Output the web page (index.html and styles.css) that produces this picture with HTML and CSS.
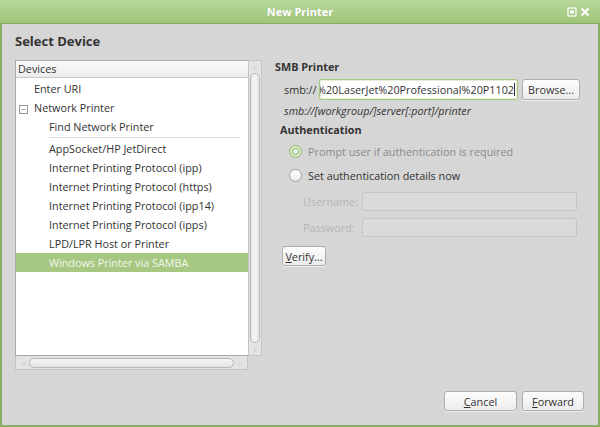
FILE: index.html
```html
<!DOCTYPE html>
<html>
<head>
<meta charset="utf-8">
<link rel="stylesheet" href="styles.css">
</head>
<body>
<div class="window">
  <div class="titlebar">
    <span class="title">New Printer</span>
    <div class="wm-buttons">
      <svg class="wm-icon" width="10" height="10" viewBox="0 0 10 10"><rect x="1" y="1" width="8" height="8" fill="none" stroke="#fff" stroke-width="1.2"/><rect x="3" y="3.5" width="4" height="3" fill="#fff"/></svg>
      <svg class="wm-icon" width="10" height="10" viewBox="0 0 10 10"><path d="M1.5 1.5 L8.5 8.5 M8.5 1.5 L1.5 8.5" stroke="#fff" stroke-width="2"/></svg>
    </div>
  </div>
  <div class="content">
    <h1 class="heading">Select Device</h1>
    <div class="main">
      <div class="tree-box">
        <div class="tree-row-wrap">
          <div class="tree">
            <div class="tree-header">Devices</div>
            <div class="tree-body">
              <div class="row lvl1">Enter URI</div>
              <div class="row lvl0"><span class="expander">−</span>Network Printer</div>
              <div class="row lvl2">Find Network Printer</div>
              <div class="sep"></div>
              <div class="row lvl2">AppSocket/HP JetDirect</div>
              <div class="row lvl2">Internet Printing Protocol (ipp)</div>
              <div class="row lvl2">Internet Printing Protocol (https)</div>
              <div class="row lvl2">Internet Printing Protocol (ipp14)</div>
              <div class="row lvl2">Internet Printing Protocol (ipps)</div>
              <div class="row lvl2">LPD/LPR Host or Printer</div>
              <div class="row lvl2 selected">Windows Printer via SAMBA</div>
            </div>
          </div>
          <div class="vscroll">
            <div class="arrow up">▵</div>
            <div class="vthumb"></div>
            <div class="arrow down">▿</div>
          </div>
        </div>
        <div class="hscroll">
          <div class="arrow left">◃</div>
          <div class="hthumb"></div>
          <div class="arrow right">▹</div>
        </div>
      </div>
      <div class="panel">
        <div class="section-title">SMB Printer</div>
        <div class="uri-row">
          <span class="label">smb://</span>
          <div class="entry focused"><span class="entry-text">%20LaserJet%20Professional%20P1102</span><span class="caret"></span></div>
          <button class="btn browse">Browse...</button>
        </div>
        <div class="hint">smb://[workgroup/]server[:port]/printer</div>
        <div class="section-title auth">Authentication</div>
        <div class="radio-row disabled"><span class="radio checked"></span>Prompt user if authentication is required</div>
        <div class="radio-row second"><span class="radio"></span>Set authentication details now</div>
        <div class="field-row first"><span class="field-label">Username:</span><div class="entry disabled-entry"></div></div>
        <div class="field-row"><span class="field-label">Password:</span><div class="entry disabled-entry"></div></div>
        <button class="btn verify"><u>V</u>erify...</button>
      </div>
    </div>
    <div class="actions">
      <button class="btn action cancel"><u>C</u>ancel</button>
      <button class="btn action forward"><u>F</u>orward</button>
    </div>
  </div>
</div>
</body>
</html>
```
FILE: styles.css
```css
* { box-sizing: border-box; }
html, body { margin: 0; padding: 0; }
body {
  width: 600px;
  height: 427px;
  overflow: hidden;
  font-family: "Open Sans", "DejaVu Sans", sans-serif;
  font-size: 10.8px;
  color: #333;
  background: #d6d6d6;
}
.window {
  width: 600px;
  height: 427px;
  display: flex;
  flex-direction: column;
  border: 2px solid #86ad62;
  border-top: none;
  background: #d6d6d6;
}
.titlebar {
  height: 24px;
  flex: none;
  margin: 0 -2px;
  background: linear-gradient(#b8d79c, #9fc47a);
  border-bottom: 1px solid #86ad62;
  display: flex;
  align-items: center;
  justify-content: center;
  position: relative;
}
.title {
  color: #fff;
  font-weight: bold;
  font-size: 11px;
  text-shadow: 0 0 1px rgba(0,0,0,0.1);
}
.wm-buttons {
  position: absolute;
  right: 10px;
  top: 7px;
  display: flex;
  gap: 3px;
}
.content {
  flex: 1;
  display: flex;
  flex-direction: column;
  padding: 9px 13px 14px 13px;
}
.heading {
  margin: 0 0 11px 0;
  font-size: 13px;
  font-weight: bold;
  color: #333;
  line-height: 16px;
}
.main {
  display: flex;
  flex: 1;
  gap: 13px;
}
.tree-box {
  width: 247px;
  display: flex;
  flex-direction: column;
}
.tree-row-wrap {
  display: flex;
  height: 296px;
}
.tree {
  width: 233px;
  background: #fff;
  border: 1px solid #a8a8a8;
  border-right: none;
}
.tree-header {
  height: 17px;
  line-height: 16px;
  padding-left: 2px;
  background: linear-gradient(#fafafa, #ececec);
  border-bottom: 1px solid #c8c8c8;
  color: #333;
}
.tree-body { padding-top: 1px; }
.row {
  height: 19px;
  line-height: 19px;
  white-space: nowrap;
  color: #333;
}
.lvl0 { padding-left: 3px; }
.lvl1 { padding-left: 18px; }
.lvl2 { padding-left: 33px; }
.expander {
  display: inline-block;
  width: 9px;
  height: 9px;
  border: 1px solid #999;
  font-size: 8px;
  line-height: 6px;
  text-align: center;
  color: #555;
  margin-right: 6px;
  vertical-align: 0px;
}
.sep {
  height: 1px;
  margin: 1px 8px 1px 33px;
  background: #ddd;
}
.selected {
  background: #a6c882;
  color: #f2f7ec;
}
.vscroll {
  width: 14px;
  background: #e3e3e3;
  border: 1px solid #c4c4c4;
  display: flex;
  flex-direction: column;
  align-items: center;
}
.arrow {
  font-size: 8px;
  color: #c8c8c8;
  line-height: 12px;
  height: 12px;
}
.vthumb {
  flex: 1;
  width: 10px;
  border: 1px solid #b8b8b8;
  border-radius: 5px;
  background: linear-gradient(90deg, #e9e9e9, #f4f4f4, #e4e4e4);
}
.hscroll {
  width: 233px;
  height: 14px;
  background: #e3e3e3;
  border: 1px solid #c4c4c4;
  border-top: none;
  display: flex;
  align-items: center;
  padding: 0 1px;
}
.hscroll .arrow { width: 12px; text-align: center; line-height: 12px; }
.hthumb {
  flex: 1;
  height: 10px;
  border: 1px solid #b8b8b8;
  border-radius: 5px;
  background: linear-gradient(#f4f4f4, #e4e4e4);
}
.panel {
  flex: 1;
  display: flex;
  flex-direction: column;
}
.section-title {
  font-weight: bold;
  color: #333;
  line-height: 14px;
  margin-top: 0;
}
.uri-row {
  display: flex;
  align-items: center;
  margin-top: 5px;
  margin-left: 9px;
  height: 21px;
}
.label { width: 35px; }
.entry {
  height: 21px;
  background: #fff;
  border: 1px solid #b4b4b4;
  border-radius: 2px;
  line-height: 19px;
  padding-left: 2px;
  white-space: nowrap;
  overflow: hidden;
}
.entry.focused {
  width: 199px;
  border-color: #a6c882;
  box-shadow: inset 0 0 0 1px #e4eed8;
  color: #333;
  display: flex;
  justify-content: flex-end;
  align-items: center;
  padding-right: 2px;
}
.entry-text { flex: none; white-space: nowrap; }
.caret {
  flex: none;
  display: inline-block;
  width: 1px;
  height: 13px;
  background: #333;
}
.btn {
  font-family: inherit;
  font-size: 10.8px;
  color: #333;
  background: linear-gradient(#fdfdfd, #ececec);
  border: 1px solid #adadad;
  border-radius: 3px;
  height: 21px;
  padding: 0 5px;
  margin: 0;
  box-shadow: 0 1px 0 rgba(255,255,255,0.6);
}
.browse { margin-left: 4px; width: 58px; padding: 0; }
.hint {
  font-style: italic;
  margin-left: 9px;
  margin-top: 3px;
  line-height: 15px;
}
.section-title.auth { margin-top: 5px; margin-left: 5px; }
.radio-row {
  display: flex;
  align-items: center;
  height: 18px;
  margin-left: 14px;
  margin-top: 5px;
  color: #333;
}
.radio-row.second { margin-top: 6px; }
.radio-row.disabled { color: #8a8a8a; }
.radio {
  width: 13px;
  height: 13px;
  border-radius: 50%;
  border: 1px solid #a0a0a0;
  background: linear-gradient(#ffffff, #ececec);
  margin-right: 6px;
  position: relative;
}
.radio.checked {
  border-color: #94b870;
  background: #d9e8c8;
}
.radio.checked::after {
  content: "";
  position: absolute;
  left: 2px; top: 2px;
  width: 5px; height: 5px;
  border-radius: 50%;
  border: 1px solid #8cb364;
  background: #f0f6e9;
}
.field-row {
  display: flex;
  align-items: center;
  margin-top: 7px;
  margin-left: 28px;
  height: 19px;
}
.field-row.first { margin-top: 8px; }
.field-label { width: 59px; color: #b4b4b4; }
.entry.disabled-entry {
  width: 215px;
  height: 19px;
  background: #dadada;
  border-color: #c6c6c6;
}
.verify {
  align-self: flex-start;
  margin-top: 9px;
  margin-left: 7px;
  height: 20px;
  width: 44px;
  padding: 0;
}
.actions {
  display: flex;
  justify-content: flex-end;
  gap: 5px;
  padding-right: 1px;
}
.action { height: 20px; padding: 0; }
.cancel { width: 73px; }
.forward { width: 62px; }
```
